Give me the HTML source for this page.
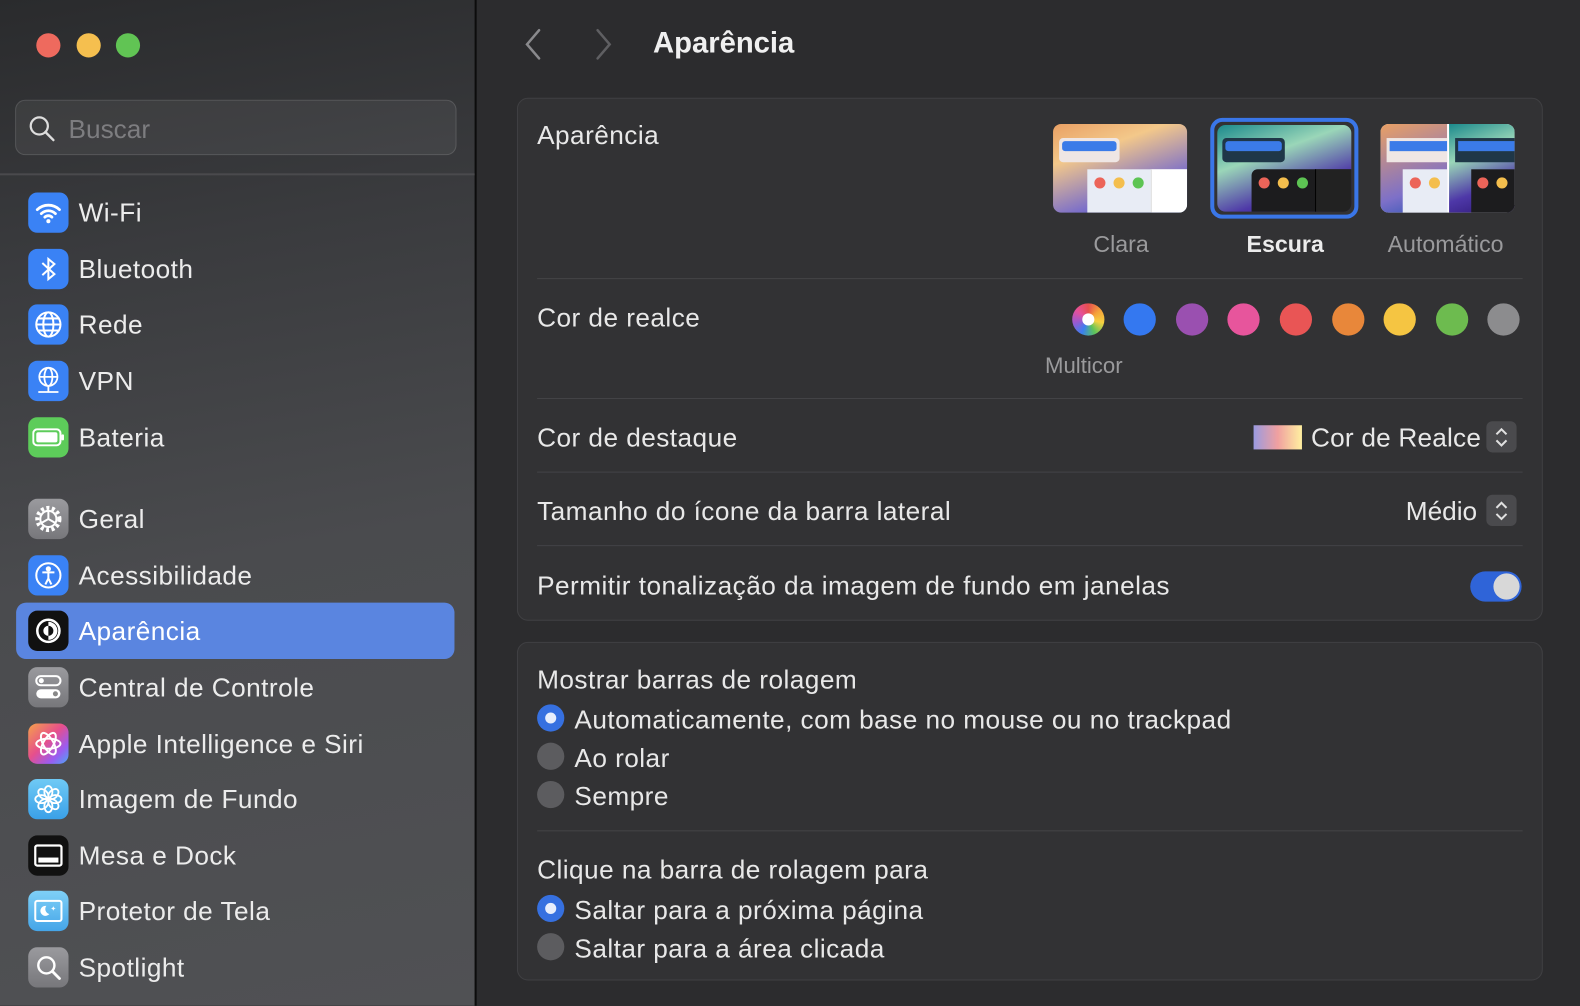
<!DOCTYPE html><html><head><meta charset="utf-8"><style>
*{margin:0;padding:0;box-sizing:border-box}
html,body{width:1580px;height:998px;overflow:hidden;background:#2c2c2e}
#w{position:absolute;left:0;top:0;width:1568px;height:992px;transform:scale(1.0077);transform-origin:0 0;font-family:"Liberation Sans",sans-serif;color:#e6e6e6}
.sb{position:absolute;left:0;top:0;width:471px;height:998px;background:linear-gradient(170deg,#2a2b2d 0%,#3a3b3e 25%,#4a4b4e 55%,#505154 100%)}
.div{position:absolute;left:471px;top:0;width:2px;height:998px;background:#0c0c0c}
.a{position:absolute}
.dot{position:absolute;width:24px;height:24px;border-radius:50%;top:33px}
.search{position:absolute;left:15px;top:99px;width:438px;height:55px;border-radius:10px;background:rgba(255,255,255,0.06);border:1px solid rgba(255,255,255,0.12)}
.item{position:absolute;left:16px;width:435px;height:56px;border-radius:10px}
.item .ic{position:absolute;left:12px;top:8px;width:40px;height:40px;border-radius:9px;display:flex;align-items:center;justify-content:center}
.item .t{position:absolute;left:62px;top:13px;font-size:26px;letter-spacing:0.45px;color:#ececec;white-space:nowrap}
.sel{background:#5a85e0}
.panel{position:absolute;left:513px;width:1018px;background:#323234;border:1px solid #404043;border-radius:11px}
.lab{position:absolute;font-size:26px;letter-spacing:0.45px;color:#e8e8e8;white-space:nowrap}
.hr{position:absolute;left:533px;width:978px;height:1px;background:#444447}
.cd{position:absolute;width:32px;height:32px;border-radius:50%;top:301px}
.step{position:absolute;width:30px;height:31px;border-radius:6px;background:#4a4a4d;left:1475px}
.radio{position:absolute;left:533px;width:27px;height:27px;border-radius:50%;background:#5c5c5f}
.radio.on{background:#3670e0}
.radio.on::after{content:"";position:absolute;left:8px;top:8px;width:11px;height:11px;border-radius:50%;background:#e8eefc}
.thumb{position:absolute;top:123px;width:133px;height:88px;border-radius:8px;overflow:hidden}
</style></head><body><div id="w">
<div class="sb"></div><div class="div"></div>
<div class="dot" style="left:36px;background:#ee6a5e"></div>
<div class="dot" style="left:76px;background:#f5bf4f"></div>
<div class="dot" style="left:115px;background:#61c454"></div>
<div class="search"><svg class="a" style="left:12px;top:14px" width="28" height="28" viewBox="0 0 28 28"><circle cx="11" cy="11" r="8.5" fill="none" stroke="#ddd" stroke-width="2.2"/><path d="M17 17l8 8" stroke="#ddd" stroke-width="2.4" stroke-linecap="round"/></svg><span class="a" style="left:52px;top:13px;font-size:26px;color:#7d7d80">Buscar</span></div>
<div class="a" style="left:0;top:172px;width:471px;height:2px;background:#4a4a4d"></div>

<div class="item" style="top:183px"><div class="ic" style="background:#3a82f5"><svg width="28" height="24" viewBox="0 0 28 24"><path d="M3 9a16 16 0 0 1 22 0M7 13a10 10 0 0 1 14 0M10.5 16.5a5 5 0 0 1 7 0" fill="none" stroke="#fff" stroke-width="2.8" stroke-linecap="round"/><circle cx="14" cy="20.5" r="2" fill="#fff"/></svg></div><div class="t">Wi-Fi</div></div>
<div class="item" style="top:239px"><div class="ic" style="background:#3a82f5"><svg width="20" height="28" viewBox="0 0 20 28"><path d="M4 8l12 11-6 5V4l6 5L4 20" fill="none" stroke="#fff" stroke-width="2"/></svg></div><div class="t">Bluetooth</div></div>
<div class="item" style="top:294px"><div class="ic" style="background:#3a82f5"><svg width="30" height="30" viewBox="0 0 30 30" fill="none" stroke="#fff" stroke-width="2"><circle cx="15" cy="15" r="12"/><ellipse cx="15" cy="15" rx="5" ry="12"/><path d="M3 15h24M5 9h20M5 21h20"/></svg></div><div class="t">Rede</div></div>
<div class="item" style="top:350px"><div class="ic" style="background:#3a82f5"><svg width="30" height="32" viewBox="0 0 30 32" fill="none" stroke="#fff" stroke-width="1.8"><circle cx="15" cy="12" r="9"/><ellipse cx="15" cy="12" rx="4" ry="9"/><path d="M6 12h18M15 21v6M5 27h20"/></svg></div><div class="t">VPN</div></div>
<div class="item" style="top:406px"><div class="ic" style="background:#5dcc5a"><svg width="32" height="18" viewBox="0 0 32 18"><rect x="1" y="1" width="27" height="16" rx="4" fill="none" stroke="#fff" stroke-width="2"/><rect x="4" y="4" width="21" height="10" rx="2" fill="#fff"/><rect x="29" y="6" width="2.5" height="6" rx="1" fill="#fff"/></svg></div><div class="t">Bateria</div></div>

<div class="item" style="top:487px"><div class="ic" style="background:linear-gradient(#9a9a9e,#77777b)"><svg width="32" height="32" viewBox="0 0 32 32" fill="none" stroke="#fff" stroke-width="2"><circle cx="16" cy="16" r="11" stroke-dasharray="3 2.5" stroke-width="4"/><circle cx="16" cy="16" r="8"/><path d="M16 16l0-8M16 16l7 4M16 16l-7 4"/></svg></div><div class="t">Geral</div></div>
<div class="item" style="top:543px"><div class="ic" style="background:#3a82f5"><svg width="30" height="30" viewBox="0 0 30 30" fill="none" stroke="#fff" stroke-width="2"><circle cx="15" cy="15" r="12"/><circle cx="15" cy="8.5" r="1.6" fill="#fff"/><path d="M9 12h12M15 12v6l-3 6M15 18l3 6"/></svg></div><div class="t">Acessibilidade</div></div>
<div class="item sel" style="top:598px"><div class="ic" style="background:#111"><svg width="28" height="28" viewBox="0 0 28 28"><circle cx="14" cy="14" r="11" fill="#111" stroke="#fff" stroke-width="2.5"/><path d="M14 5a9 9 0 0 1 0 18z" fill="#fff"/><circle cx="14" cy="14" r="5" fill="#111"/><path d="M14 9a5 5 0 0 0 0 10" fill="#fff"/></svg></div><div class="t" style="color:#fff">Aparência</div></div>
<div class="item" style="top:654px"><div class="ic" style="background:linear-gradient(#9a9a9e,#77777b)"><svg width="28" height="26" viewBox="0 0 28 26"><rect x="2" y="2" width="24" height="9" rx="4.5" fill="none" stroke="#fff" stroke-width="2"/><circle cx="7" cy="6.5" r="2.5" fill="#fff"/><rect x="2" y="15" width="24" height="9" rx="4.5" fill="#fff"/><circle cx="21" cy="19.5" r="2.5" fill="#888"/></svg></div><div class="t">Central de Controle</div></div>
<div class="item" style="top:710px"><div class="ic" style="background:linear-gradient(135deg,#f5a24a,#e64f8c 45%,#9b5cf0 75%,#4aa7f5)"><svg width="30" height="30" viewBox="0 0 30 30" fill="none" stroke="#fff" stroke-width="2"><ellipse cx="15" cy="15" rx="12" ry="5"/><ellipse cx="15" cy="15" rx="12" ry="5" transform="rotate(60 15 15)"/><ellipse cx="15" cy="15" rx="12" ry="5" transform="rotate(120 15 15)"/></svg></div><div class="t">Apple Intelligence e Siri</div></div>
<div class="item" style="top:765px"><div class="ic" style="background:linear-gradient(#6fcaf5,#3aa0e8)"><svg width="30" height="30" viewBox="0 0 30 30" fill="none" stroke="#fff" stroke-width="1.8"><g transform="translate(15 15)"><ellipse cx="0" cy="-7" rx="4" ry="6"/><ellipse cx="0" cy="-7" rx="4" ry="6" transform="rotate(45)"/><ellipse cx="0" cy="-7" rx="4" ry="6" transform="rotate(90)"/><ellipse cx="0" cy="-7" rx="4" ry="6" transform="rotate(135)"/><ellipse cx="0" cy="-7" rx="4" ry="6" transform="rotate(180)"/><ellipse cx="0" cy="-7" rx="4" ry="6" transform="rotate(225)"/><ellipse cx="0" cy="-7" rx="4" ry="6" transform="rotate(270)"/><ellipse cx="0" cy="-7" rx="4" ry="6" transform="rotate(315)"/></g></svg></div><div class="t">Imagem de Fundo</div></div>
<div class="item" style="top:821px"><div class="ic" style="background:#111"><svg width="30" height="24" viewBox="0 0 30 24"><rect x="2" y="2" width="26" height="20" rx="2" fill="none" stroke="#fff" stroke-width="2.2"/><rect x="5" y="14" width="20" height="5" fill="#fff"/></svg></div><div class="t">Mesa e Dock</div></div>
<div class="item" style="top:876px"><div class="ic" style="background:linear-gradient(#7fd0f7,#45a5e8)"><svg width="30" height="24" viewBox="0 0 30 24"><rect x="2" y="2" width="26" height="20" rx="2" fill="none" stroke="#fff" stroke-width="2"/><path d="M13 7a5 5 0 1 0 3 8 5 5 0 0 1-3-8z" fill="#fff"/><text x="17" y="12" font-size="7" fill="#fff">✦</text></svg></div><div class="t">Protetor de Tela</div></div>
<div class="item" style="top:932px"><div class="ic" style="background:linear-gradient(#9a9a9e,#77777b)"><svg width="28" height="28" viewBox="0 0 28 28"><circle cx="12" cy="12" r="8" fill="none" stroke="#fff" stroke-width="2.4"/><path d="M18 18l7 7" stroke="#fff" stroke-width="2.8" stroke-linecap="round"/></svg></div><div class="t">Spotlight</div></div>

<svg class="a" style="left:515px;top:28px" width="30" height="32" viewBox="0 0 30 32"><path d="M20 2L8 16l12 14" fill="none" stroke="#8a8a8d" stroke-width="2.5" stroke-linecap="round"/></svg>
<svg class="a" style="left:585px;top:28px" width="30" height="32" viewBox="0 0 30 32"><path d="M8 2l12 14L8 30" fill="none" stroke="#5f5f62" stroke-width="2.5" stroke-linecap="round"/></svg>
<div class="a" style="left:648px;top:27px;font-size:29px;font-weight:bold;color:#f0f0f0">Aparência</div>

<div class="panel" style="top:97px;height:519px"></div>
<div class="lab" style="left:533px;top:119px">Aparência</div>
<div class="thumb" style="left:1045px;background:linear-gradient(160deg,#e9a064 0%,#f3c88a 30%,#7d70c8 70%,#2c53b5 100%)"><div class="a" style="left:6px;top:14px;width:60px;height:24px;border-radius:4px;background:#efe6e4"></div><div class="a" style="left:9px;top:17px;width:54px;height:10px;border-radius:3px;background:#3b7be8"></div><div class="a" style="left:34px;top:45px;width:99px;height:43px;background:#e8ecf5"></div><div class="a" style="left:97px;top:45px;width:36px;height:43px;background:#fff;border-left:1px solid #ddd"></div><div class="a" style="left:41px;top:53px;width:11px;height:11px;border-radius:50%;background:#ec6459"></div><div class="a" style="left:60px;top:53px;width:11px;height:11px;border-radius:50%;background:#f4be4d"></div><div class="a" style="left:79px;top:53px;width:11px;height:11px;border-radius:50%;background:#5dc453"></div></div>
<div class="a" style="left:1201px;top:117px;width:147px;height:100px;border-radius:12px;border:4px solid #3a76e8"></div>
<div class="thumb" style="left:1208px;top:124px;width:133px;height:86px;background:linear-gradient(160deg,#1b8a8c 0%,#9ad6b8 35%,#4e38a8 70%,#2a1470 100%)"><div class="a" style="left:5px;top:13px;width:62px;height:24px;border-radius:4px;background:#1f3748"></div><div class="a" style="left:8px;top:16px;width:56px;height:10px;border-radius:3px;background:#3b7be8"></div><div class="a" style="left:34px;top:44px;width:99px;height:43px;background:#1c1c1e;border-radius:6px 0 0 0"></div><div class="a" style="left:97px;top:44px;width:36px;height:43px;background:#222;border-left:1px solid #000"></div><div class="a" style="left:41px;top:52px;width:11px;height:11px;border-radius:50%;background:#ec6459"></div><div class="a" style="left:60px;top:52px;width:11px;height:11px;border-radius:50%;background:#f4be4d"></div><div class="a" style="left:79px;top:52px;width:11px;height:11px;border-radius:50%;background:#5dc453"></div></div>
<div class="thumb" style="left:1370px;background:#fff"><div class="a" style="left:0;top:0;width:66px;height:88px;background:linear-gradient(160deg,#e9a064,#7d70c8 70%,#2c53b5)"></div><div class="a" style="left:68px;top:0;width:65px;height:88px;background:linear-gradient(160deg,#1b8a8c,#9ad6b8 35%,#4e38a8 70%,#2a1470)"></div><div class="a" style="left:6px;top:14px;width:60px;height:24px;background:#efe6e4"></div><div class="a" style="left:9px;top:17px;width:57px;height:10px;background:#3b7be8"></div><div class="a" style="left:74px;top:14px;width:59px;height:24px;background:#1f3748"></div><div class="a" style="left:77px;top:17px;width:56px;height:10px;background:#3b7be8"></div><div class="a" style="left:22px;top:45px;width:44px;height:43px;background:#e8ecf5"></div><div class="a" style="left:90px;top:45px;width:43px;height:43px;background:#1c1c1e"></div><div class="a" style="left:29px;top:53px;width:11px;height:11px;border-radius:50%;background:#ec6459"></div><div class="a" style="left:48px;top:53px;width:11px;height:11px;border-radius:50%;background:#f4be4d"></div><div class="a" style="left:96px;top:53px;width:11px;height:11px;border-radius:50%;background:#ec6459"></div><div class="a" style="left:115px;top:53px;width:11px;height:11px;border-radius:50%;background:#f4be4d"></div></div>
<div class="a" style="left:1085px;top:229px;font-size:23px;color:#9a9a9c">Clara</div>
<div class="a" style="left:1237px;top:229px;font-size:23px;font-weight:bold;color:#ececec">Escura</div>
<div class="a" style="left:1377px;top:229px;font-size:23px;color:#9a9a9c">Automático</div>
<div class="hr" style="top:276px"></div>

<div class="lab" style="left:533px;top:300px">Cor de realce</div>
<div class="cd" style="left:1064px;background:conic-gradient(#e64f4f,#f5a23a,#f5d040,#5cc45a,#3a80f0,#9b59d0,#e6509a,#e64f4f)"><div class="a" style="left:10px;top:10px;width:12px;height:12px;border-radius:50%;background:#fff"></div></div>
<div class="cd" style="left:1115px;background:#3478f0"></div>
<div class="cd" style="left:1167px;background:#9a50b0"></div>
<div class="cd" style="left:1218px;background:#e7559c"></div>
<div class="cd" style="left:1270px;background:#e95555"></div>
<div class="cd" style="left:1322px;background:#e8873a"></div>
<div class="cd" style="left:1373px;background:#f5c542"></div>
<div class="cd" style="left:1425px;background:#6dbb4f"></div>
<div class="cd" style="left:1476px;background:#8c8c8e"></div>
<div class="a" style="left:1037px;top:350px;font-size:22px;color:#9a9a9c">Multicor</div>
<div class="hr" style="top:395px"></div>

<div class="lab" style="left:533px;top:419px">Cor de destaque</div>
<div class="a" style="left:1244px;top:422px;width:48px;height:24px;background:linear-gradient(90deg,#9a9ae0,#f0a0a0 50%,#fff0a0)"></div>
<div class="lab" style="left:1301px;top:419px;letter-spacing:0.2px">Cor de Realce</div>
<div class="step" style="top:418px"></div>
<svg class="a" style="left:1481px;top:421px" width="18" height="26" viewBox="0 0 18 26"><path d="M4 10l5-5 5 5M4 16l5 5 5-5" fill="none" stroke="#e0e0e0" stroke-width="2"/></svg>
<div class="hr" style="top:468px"></div>

<div class="lab" style="left:533px;top:492px">Tamanho do ícone da barra lateral</div>
<div class="lab" style="left:1395px;top:492px;letter-spacing:0">Médio</div>
<div class="step" style="top:491px"></div>
<svg class="a" style="left:1481px;top:494px" width="18" height="26" viewBox="0 0 18 26"><path d="M4 10l5-5 5 5M4 16l5 5 5-5" fill="none" stroke="#e0e0e0" stroke-width="2"/></svg>
<div class="hr" style="top:541px"></div>

<div class="lab" style="left:533px;top:566px">Permitir tonalização da imagem de fundo em janelas</div>
<div class="a" style="left:1459px;top:567px;width:51px;height:30px;border-radius:15px;background:#2f64d8"><div class="a" style="left:23px;top:2px;width:26px;height:26px;border-radius:50%;background:#d8d8d8"></div></div>

<div class="panel" style="top:637px;height:336px"></div>
<div class="lab" style="left:533px;top:659px">Mostrar barras de rolagem</div>
<div class="radio on" style="top:699px"></div><div class="lab" style="left:570px;top:699px">Automaticamente, com base no mouse ou no trackpad</div>
<div class="radio" style="top:737px"></div><div class="lab" style="left:570px;top:737px">Ao rolar</div>
<div class="radio" style="top:775px"></div><div class="lab" style="left:570px;top:775px">Sempre</div>
<div class="hr" style="top:824px"></div>
<div class="lab" style="left:533px;top:848px">Clique na barra de rolagem para</div>
<div class="radio on" style="top:888px"></div><div class="lab" style="left:570px;top:888px">Saltar para a próxima página</div>
<div class="radio" style="top:926px"></div><div class="lab" style="left:570px;top:926px">Saltar para a área clicada</div>
</div></body></html>
